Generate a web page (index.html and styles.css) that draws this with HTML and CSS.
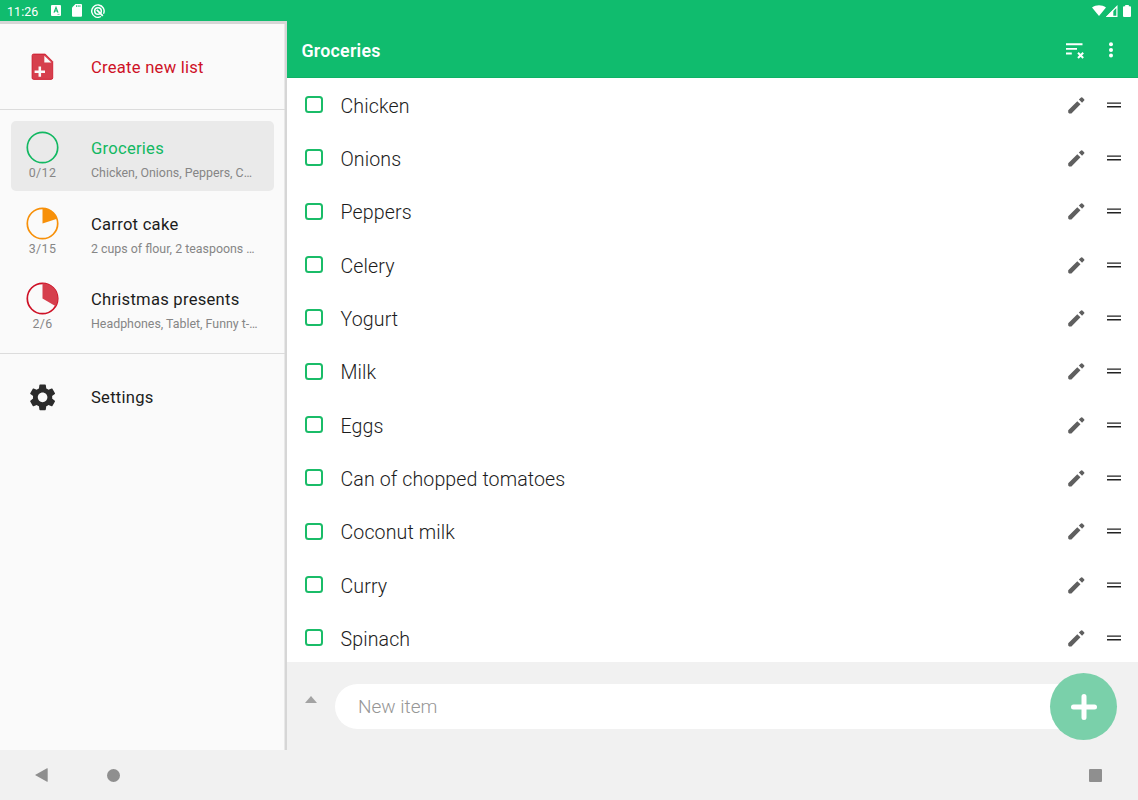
FILE: index.html
```
<!DOCTYPE html>
<html lang="en">
<head>
  <meta charset="UTF-8">
  <meta name="viewport" content="width=device-width, initial-scale=1.0">
  <title>Groceries</title>
  <link rel="stylesheet" href="styles.css">
</head>
<body>
  <!-- shared row icons -->
  <svg class="sprite">
    <symbol id="pencil" viewBox="0 0 24 24">
      <path d="M3.500 17.700V20.200L4.500 21.200H7L16.900 11.300 13.400 7.800zM20.900 7.200a1 1 0 0 0 0-1.400l-2-2a1 1 0 0 0-1.400 0l-2.400 2.300 3.500 3.500z"/>
    </symbol>
    <symbol id="drag" viewBox="0 0 14 6">
      <path d="M0 1.100h14M0 4.800h14" stroke="#222" stroke-width="1.400"/>
    </symbol>
  </svg>

  <div class="statusbar">
    <span class="clock">11:26</span>
    <svg class="status-a" viewBox="0 0 10 11">
      <rect width="10" height="11" rx="1" fill="#fff"/>
      <path d="M3 7.600 5 2.400 7 7.600M3.700 6h2.600" fill="none" stroke="#10bc6e" stroke-width="1.200"/>
      <path d="M6.500 9.400h2" stroke="#10bc6e" stroke-width=".6"/>
    </svg>
    <svg class="status-sd" viewBox="0 0 10 13">
      <path d="M3.500 0H9a1 1 0 0 1 1 1v10.800a1 1 0 0 1-1 1H1a1 1 0 0 1-1-1V3.500z" fill="#fff"/>
      <path d="M4.500 1.200v1.800M6.200 1.200v1.800M7.900 1.200v1.800" stroke="#10bc6e" stroke-width=".8"/>
    </svg>
    <svg class="status-q" viewBox="0 0 14 14" fill="none" stroke="#fff">
      <path d="M10 12.500A6.200 6.200 0 1 1 12.500 9.800" stroke-width="1.400"/>
      <circle cx="7" cy="7" r="3.300" stroke-width="1.500"/>
      <path d="M5.800 5.800l6 6" stroke-width="1.800"/>
    </svg>
    <div class="status-right">
      <svg class="status-wifi" viewBox="0 0 14 11"><path d="M7 11 0 2.500C4 -.6 10 -.6 14 2.500z" fill="#fff"/></svg>
      <svg class="status-signal" viewBox="0 0 12 12">
        <path d="M10.900 1.500V11.300H1.300z" fill="none" stroke="#fff" stroke-width="1.200"/>
        <path d="M0 12 7.300 4.700V12z" fill="#fff"/>
      </svg>
      <svg class="status-battery" viewBox="0 0 8 12"><path d="M2.200 0h3.600v1.200H7a1 1 0 0 1 1 1V11a1 1 0 0 1-1 1H1a1 1 0 0 1-1-1V2.200a1 1 0 0 1 1-1h1.200z" fill="#fff"/></svg>
    </div>
  </div>

  <div class="app">
    <nav class="drawer">
      <div class="entry create">
        <svg class="entry-icon" viewBox="0 0 24 24">
          <path d="M5 2.300H13.700L19.300 7.900V20.100a1.200 1.200 0 0 1-1.200 1.200H5a1.200 1.200 0 0 1-1.200-1.200V3.500a1.200 1.200 0 0 1 1.200-1.200z" fill="#d63f4d" stroke="#ce1126" stroke-width=".6"/>
          <path d="M13 3.500V8.700H18.300z" fill="#fafafa"/>
          <path d="M9.600 11.600v7.800M5.700 15.500h7.800" stroke="#fafafa" stroke-width="1.900"/>
        </svg>
        <span class="entry-title">Create new list</span>
      </div>

      <div class="lists">
        <div class="list selected">
          <div class="progress">
            <svg class="pie green" viewBox="0 0 33 33"><circle cx="16.500" cy="16.500" r="15.200"/></svg>
            <span>0/12</span>
          </div>
          <div class="list-text">
            <div class="entry-title">Groceries</div>
            <div class="summary">Chicken, Onions, Peppers, C…</div>
          </div>
        </div>
        <div class="list">
          <div class="progress">
            <svg class="pie orange" viewBox="0 0 33 33"><circle cx="16.500" cy="16.500" r="15.200"/><path d="M16.500 16.500V1.200A15.300 15.300 0 0 1 31.050 11.770z"/></svg>
            <span>3/15</span>
          </div>
          <div class="list-text">
            <div class="entry-title">Carrot cake</div>
            <div class="summary">2 cups of flour, 2 teaspoons …</div>
          </div>
        </div>
        <div class="list">
          <div class="progress">
            <svg class="pie red" viewBox="0 0 33 33"><circle cx="16.500" cy="16.500" r="15.200"/><path d="M16.500 16.500V1.200A15.300 15.300 0 0 1 29.750 24.150z"/></svg>
            <span>2/6</span>
          </div>
          <div class="list-text">
            <div class="entry-title">Christmas presents</div>
            <div class="summary">Headphones, Tablet, Funny t-…</div>
          </div>
        </div>
      </div>

      <div class="entry settings">
        <svg class="entry-icon" viewBox="0.3 0.5 24 24">
          <path fill="#2b2b2b" d="M19.140 12.940c.040-.300.060-.610.060-.940 0-.320-.020-.640-.070-.940l2.030-1.580c.180-.140.230-.410.120-.610l-1.920-3.320c-.120-.220-.370-.290-.590-.220l-2.390.960c-.500-.380-1.030-.700-1.620-.940l-.360-2.540c-.040-.240-.240-.410-.480-.410h-3.840c-.240 0-.430.170-.470.410l-.360 2.540c-.590.240-1.130.570-1.620.940l-2.390-.960c-.220-.080-.470 0-.590.220L2.740 8.870c-.120.210-.080.470.120.610l2.030 1.580c-.050.300-.090.630-.090.940s.020.640.070.940l-2.030 1.580c-.180.140-.230.410-.120.610l1.920 3.320c.120.220.370.290.590.220l2.390-.960c.500.380 1.030.700 1.620.940l.360 2.540c.050.240.240.410.480.410h3.840c.240 0 .440-.170.470-.410l.360-2.540c.590-.240 1.130-.560 1.620-.940l2.390.960c.220.080.470 0 .590-.220l1.920-3.320c.120-.220.070-.470-.120-.610l-2.010-1.580zM12 15.600c-1.980 0-3.600-1.620-3.600-3.600s1.620-3.600 3.600-3.600 3.600 1.620 3.600 3.600-1.620 3.600-3.600 3.600z"/>
        </svg>
        <span class="entry-title">Settings</span>
      </div>
    </nav>

    <main class="content">
      <header class="toolbar">
        <h1>Groceries</h1>
        <svg class="clear-done" viewBox="0 0 18 16" stroke="#fff" fill="none">
          <path d="M0 1.300h16.500M0 5.900h11M0 10.500h5.800" stroke-width="1.900"/>
          <path d="M12 9.800l5.200 5.200M17.200 9.800l-5.200 5.200" stroke-width="2"/>
        </svg>
        <svg class="more" viewBox="0 0 4 16" fill="#fff"><circle cx="2" cy="2.300" r="2"/><circle cx="2" cy="7.900" r="2"/><circle cx="2" cy="13.400" r="2"/></svg>
      </header>

      <ul class="items">
        <li><i class="box"></i><span>Chicken</span><svg class="edit"><use href="#pencil"/></svg><svg class="handle"><use href="#drag"/></svg></li>
        <li><i class="box"></i><span>Onions</span><svg class="edit"><use href="#pencil"/></svg><svg class="handle"><use href="#drag"/></svg></li>
        <li><i class="box"></i><span>Peppers</span><svg class="edit"><use href="#pencil"/></svg><svg class="handle"><use href="#drag"/></svg></li>
        <li><i class="box"></i><span>Celery</span><svg class="edit"><use href="#pencil"/></svg><svg class="handle"><use href="#drag"/></svg></li>
        <li><i class="box"></i><span>Yogurt</span><svg class="edit"><use href="#pencil"/></svg><svg class="handle"><use href="#drag"/></svg></li>
        <li><i class="box"></i><span>Milk</span><svg class="edit"><use href="#pencil"/></svg><svg class="handle"><use href="#drag"/></svg></li>
        <li><i class="box"></i><span>Eggs</span><svg class="edit"><use href="#pencil"/></svg><svg class="handle"><use href="#drag"/></svg></li>
        <li><i class="box"></i><span>Can of chopped tomatoes</span><svg class="edit"><use href="#pencil"/></svg><svg class="handle"><use href="#drag"/></svg></li>
        <li><i class="box"></i><span>Coconut milk</span><svg class="edit"><use href="#pencil"/></svg><svg class="handle"><use href="#drag"/></svg></li>
        <li><i class="box"></i><span>Curry</span><svg class="edit"><use href="#pencil"/></svg><svg class="handle"><use href="#drag"/></svg></li>
        <li><i class="box"></i><span>Spinach</span><svg class="edit"><use href="#pencil"/></svg><svg class="handle"><use href="#drag"/></svg></li>
      </ul>

      <div class="new-item">
        <svg class="expand" viewBox="0 0 12 7"><path d="M0 7 6 0l6 7z" fill="#a3a3a3"/></svg>
        <div class="field">New item</div>
        <div class="add">
          <svg viewBox="0 0 26 26"><path d="M13 2.500v21M2.500 13h21" stroke="#fff" stroke-width="5" stroke-linecap="round"/></svg>
        </div>
      </div>
    </main>
  </div>

  <div class="navbar">
    <svg class="nav-back" viewBox="0 0 13 14"><path d="M0 7 12 .3q.7-.3.700.5v12.400q0 .8-.7.500z" fill="#8f8f8f"/></svg>
    <i class="nav-home"></i>
    <i class="nav-recent"></i>
  </div>
</body>
</html>
```
FILE: styles.css
```
* {
  box-sizing: border-box;
}
body {
  margin: 0;
  width: 1138px;
  height: 800px;
  overflow: hidden;
  display: flex;
  flex-direction: column;
  font-family: Roboto, sans-serif;
  color: #1c1c1c;
  background: #fff;
}
svg {
  display: block;
  flex: none;
}
.sprite {
  display: none;
}

/* status bar */
.statusbar {
  height: 21px;
  flex: none;
  display: flex;
  align-items: center;
  padding: 1px 7px 0 7px;
  background: #10bc6e;
  color: #fff;
}
.clock {
  width: 44px;
  font-size: 12.4px;
  letter-spacing: 0.1px;
}
.status-a {
  width: 10px;
  height: 11px;
  margin-top: -1px;
}
.status-sd {
  width: 10px;
  height: 13px;
  margin: -1px 0 0 11px;
}
.status-q {
  width: 14px;
  height: 14px;
  margin: -1px 0 0 9px;
}
.status-right {
  margin-left: auto;
  display: flex;
  align-items: center;
}
.status-wifi {
  width: 14px;
  height: 11px;
  margin-top: -1px;
}
.status-signal {
  width: 12px;
  height: 12px;
}
.status-battery {
  width: 8px;
  height: 12px;
  margin-left: 5px;
}

.app {
  height: 729px;
  flex: none;
  display: flex;
}

/* drawer */
.drawer {
  width: 287px;
  flex: none;
  border-top: 3px solid #d6d6d6;
  border-right: 2px solid #d6d6d6;
  box-shadow: inset -1px 0 #e8e8e8;
  background: #fafafa;
}
.entry {
  display: flex;
  align-items: center;
  padding-left: 27px;
}
.create {
  height: 85px;
}
.settings {
  height: 88px;
}
.entry-icon {
  width: 32px;
  height: 32px;
  margin-right: 32px;
}
.entry-title {
  font-size: 16.6px;
  line-height: 20px;
  font-weight: 450;
  letter-spacing: 0.25px;
  white-space: nowrap;
}
.create .entry-title {
  padding-top: 2px;
  color: #ce1126;
}
.lists {
  height: 245px;
  padding: 11px;
  border-top: 1px solid #dcdcdc;
  border-bottom: 1px solid #dcdcdc;
  display: flex;
  flex-direction: column;
  gap: 6px;
}
.list {
  width: 263px;
  height: 69.5px;
  flex: none;
  display: flex;
  border-radius: 5px;
}
.selected {
  background: #eaeaea;
}
.selected .entry-title {
  color: #12b862;
}
.progress {
  width: 63px;
  margin-right: 17px;
  padding-top: 10px;
  display: flex;
  flex-direction: column;
  align-items: center;
  font-size: 12.4px;
  line-height: 18px;
  letter-spacing: 0.4px;
  color: #868686;
}
.pie {
  width: 33px;
  height: 33px;
}
.pie circle {
  fill: none;
  stroke-width: 1.7;
}
.green circle {
  stroke: #12b862;
}
.orange circle {
  stroke: #f79009;
}
.orange path {
  fill: #f79009;
}
.red circle {
  stroke: #ce1126;
}
.red path {
  fill: #d63f4d;
}
.list-text {
  padding-top: 18px;
}
.summary {
  margin-top: 6px;
  font-size: 12.4px;
  line-height: 16px;
  letter-spacing: 0;
  white-space: nowrap;
  color: #868686;
}

/* list content */
.content {
  flex: 1;
  display: flex;
  flex-direction: column;
}
.toolbar {
  height: 57px;
  flex: none;
  display: flex;
  align-items: center;
  padding: 0 25px 0 14.5px;
  background: #10bc6e;
  border-bottom: 1px solid #0fb166;
  color: #fff;
}
.toolbar h1 {
  margin: 2px auto 0 0;
  font-size: 17.8px;
  font-weight: 600;
  letter-spacing: 0.25px;
}
.clear-done {
  width: 18px;
  height: 16px;
  margin: 3px 25px 0 0;
}
.more {
  width: 4px;
  height: 16px;
  margin-top: 1px;
}
.items {
  height: 584px;
  flex: none;
  margin: 0;
  padding: 0;
  overflow: hidden;
  list-style: none;
}
.items li {
  height: 53.33px;
  display: flex;
  align-items: center;
  padding: 0 17px 0 18px;
}
.items span {
  flex: 1;
  padding-top: 3px;
  font-size: 19.6px;
  font-weight: 300;
  letter-spacing: 0.1px;
}
.box {
  width: 18px;
  height: 17px;
  margin-right: 17.5px;
  border: 2px solid #1abc68;
  border-radius: 3.5px;
}
.edit {
  width: 22px;
  height: 22px;
  margin-right: 20px;
  fill: #5f5f5f;
}
.handle {
  width: 14px;
  height: 6px;
}

/* new item bar */
.new-item {
  height: 88px;
  display: flex;
  align-items: center;
  padding: 0 21px 0 18px;
  background: #f1f1f1;
}
.expand {
  width: 12px;
  height: 7px;
  margin: -13px 18px 0 0;
}
.field {
  flex: 1;
  height: 45px;
  padding-left: 23px;
  border-radius: 23px 0 0 23px;
  background: #fff;
  color: #969696;
  font-size: 19px;
  font-weight: 350;
  line-height: 46px;
}
.add {
  width: 67px;
  height: 67px;
  margin-left: -23px;
  display: flex;
  align-items: center;
  justify-content: center;
  border-radius: 50%;
  background: #7ad0aa;
}
.add svg {
  width: 26px;
  height: 26px;
  margin-top: 1px;
}

/* system navigation */
.navbar {
  height: 50px;
  flex: none;
  display: flex;
  align-items: center;
  padding: 0 36px 0 35px;
  background: #f1f1f1;
}
.nav-back {
  width: 13px;
  height: 14px;
}
.nav-home {
  width: 13px;
  height: 13px;
  margin-left: 59px;
  border-radius: 50%;
  background: #8f8f8f;
}
.nav-recent {
  width: 13px;
  height: 13px;
  margin-left: auto;
  border-radius: 1px;
  background: #8f8f8f;
}
```
